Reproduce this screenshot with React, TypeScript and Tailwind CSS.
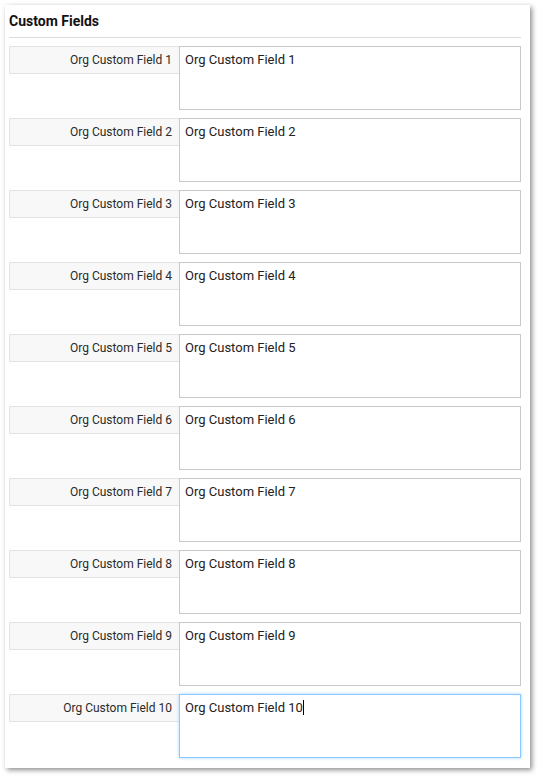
const fields = Array.from({ length: 10 }, (_, i) => `Org Custom Field ${i + 1}`);

function FieldRow({ label, focused }: { label: string; focused?: boolean }) {
  return (
    <div className="flex items-start">
      <div className="w-[170px] h-[28px] shrink-0 border border-[#e3e3e3] border-r-0 bg-[#f8f8f8] flex items-center justify-end pr-[7px] text-[12px] text-[#2a2a2a]">
        {label}
      </div>
      {focused ? (
        <div className="w-[342px] h-[64px] border border-[#8ec9ff] shadow-[0_0_3px_#9fd3ff] px-[5px] pt-[4px] text-[13px] text-[#222] leading-[18px]">
          {label}
          <span className="inline-block w-px h-[15px] bg-black align-[-3px]" />
        </div>
      ) : (
        <textarea
          readOnly
          defaultValue={label}
          className="w-[342px] h-[64px] border border-[#c9c9c9] px-[5px] pt-[4px] text-[13px] text-[#222] leading-[18px] resize-none outline-none"
        />
      )}
    </div>
  );
}

export default function App() {
  return (
    <div className="w-[540px] h-[777px] bg-white pt-[5px] pl-[5px] font-['Roboto',sans-serif]">
      <div className="w-[525px] h-[763px] bg-white shadow-[2px_2px_5px_rgba(0,0,0,0.45)] px-[4px]">
        <div className="h-[33px] flex items-center border-b border-[#dcdcdc] mr-[5px]">
          <h2 className="text-[14px] font-bold text-[#111]">Custom Fields</h2>
        </div>
        <div className="flex flex-col gap-[8px] pt-[8px]">
          {fields.map((f, i) => (
            <FieldRow key={f} label={f} focused={i === 9} />
          ))}
        </div>
      </div>
    </div>
  );
}
